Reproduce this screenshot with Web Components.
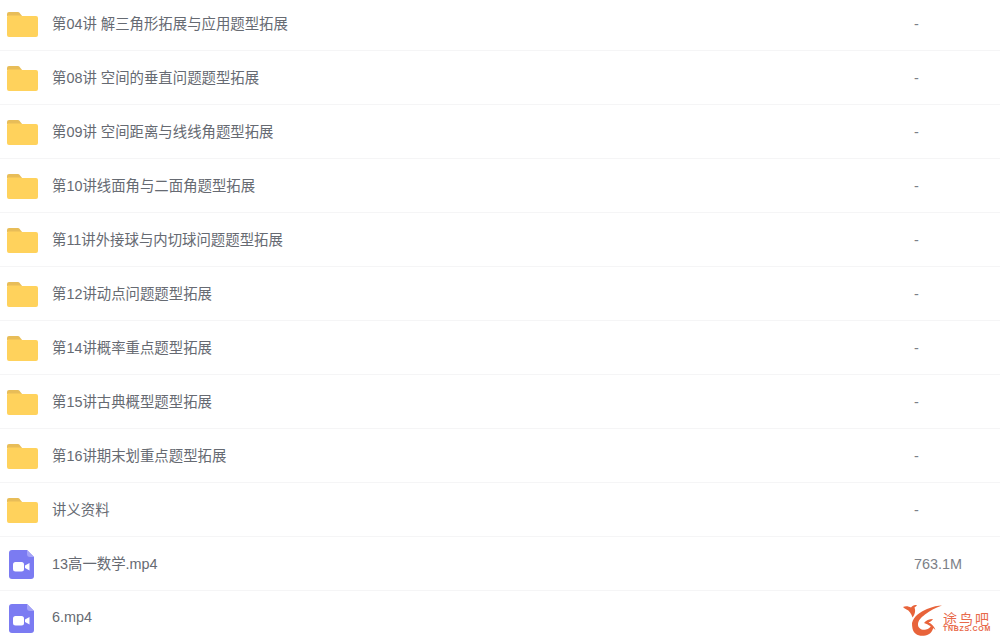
<!DOCTYPE html>
<html>
<head>
<meta charset="utf-8">
<style>
  html, body { margin: 0; height: 100%; overflow: hidden; background: #fff; }
</style>
</head>
<body>
<file-list>
  <file-row name="第04讲 解三角形拓展与应用题型拓展" size="-"></file-row>
  <file-row name="第08讲 空间的垂直问题题型拓展" size="-"></file-row>
  <file-row name="第09讲 空间距离与线线角题型拓展" size="-"></file-row>
  <file-row name="第10讲线面角与二面角题型拓展" size="-"></file-row>
  <file-row name="第11讲外接球与内切球问题题型拓展" size="-"></file-row>
  <file-row name="第12讲动点问题题型拓展" size="-"></file-row>
  <file-row name="第14讲概率重点题型拓展" size="-"></file-row>
  <file-row name="第15讲古典概型题型拓展" size="-"></file-row>
  <file-row name="第16讲期末划重点题型拓展" size="-"></file-row>
  <file-row name="讲义资料" size="-"></file-row>
  <file-row type="video" name="13高一数学.mp4" size="763.1M"></file-row>
  <file-row type="video" name="6.mp4" size=""></file-row>
</file-list>
<site-mark></site-mark>
<script>
class FileList extends HTMLElement {
    constructor() {
        super();
        this.attachShadow({ mode: "open" });
        this.shadowRoot.innerHTML = `
        <style>
            :host { display: block; margin-top: -3px; }
        </style>
        <slot></slot>
        `;
    }
}
customElements.define("file-list", FileList);

const FOLDER = `<svg width="31" height="25" viewBox="0 0 31 25">
    <path d="M0 2a2 2 0 0 1 2-2h9a2 2 0 0 1 1.500.7L15 4H0z" fill="#e8bd58"/>
    <path d="M0 5a2 2 0 0 1 1-1.500h12L15 4h14a2 2 0 0 1 2 2v17a2 2 0 0 1-2 2H2a2 2 0 0 1-2-2z" fill="#ffd25c"/>
</svg>`;

const VIDEO = `<svg width="25" height="29" viewBox="0 0 25 29">
    <path d="M3 0h15l7 7v19a3 3 0 0 1-3 3H3a3 3 0 0 1-3-3V3a3 3 0 0 1 3-3z" fill="#7b7bf2"/>
    <path d="M18 0l7 7h-4a3 3 0 0 1-3-3z" fill="#a5a4f7"/>
    <rect x="4" y="12" width="11" height="9.500" rx="2.500" fill="#fff"/>
    <path d="M16 15.500l4.500-2.500v7.500L16 18z" fill="#fff"/>
</svg>`;

class FileRow extends HTMLElement {
    constructor() {
        super();
        this.attachShadow({ mode: "open" });
        const video = this.getAttribute("type") === "video";
        this.shadowRoot.innerHTML = `
        <style>
            :host {
                display: grid;
                grid-template-columns: 52px 1fr 86px;
                align-items: center;
                height: 53px;
                border-bottom: 1px solid #f5f5f6;
                font: 14.4px "Liberation Sans", "Noto Sans CJK SC", sans-serif;
                color: #666a72;
            }
            .icon { display: flex; padding: 2px 0 0 ${video ? 9 : 7}px; }
            .name { padding-bottom: 2px; }
            .size { color: #7c8087; }
        </style>
        <span class="icon">${video ? VIDEO : FOLDER}</span>
        <span class="name">${this.getAttribute("name")}</span>
        <span class="size">${this.getAttribute("size") || ""}</span>
        `;
    }
}
customElements.define("file-row", FileRow);

class SiteMark extends HTMLElement {
    constructor() {
        super();
        this.attachShadow({ mode: "open" });
        this.shadowRoot.innerHTML = `
        <style>
            :host {
                position: absolute;
                right: 9px;
                bottom: 1px;
                display: flex;
                color: #e8694a;
            }
            svg { flex: none; }
            .words { display: flex; flex-direction: column; width: 48px; padding-top: 7px; }
            .cn { font: 14px/16px "Noto Sans CJK SC", sans-serif; letter-spacing: 2px; }
            .en { margin-top: -1px; font: bold 7px/8px "Liberation Sans", sans-serif; letter-spacing: .7px; white-space: nowrap; }
        </style>
        <svg width="40" height="33" viewBox="0 0 40 33" fill="#e8633a">
            <path d="M0 4c3-1.500 6-.5 8 .5C9.500 2.500 12 1.500 14 2.500l-2.500 2c1.500 4 0 7.500-2 10C8.500 10.500 6 7.500 3.500 6.500 2.500 6 1 5 0 4z"/>
            <path d="M9 20c2-7 8-11 15-14 6-2.500 11-3.500 15-3.500-6 2-12 5-17 9-4 3-7 6-7 10 0 4 4 6 8 5 2.500-.6 4.500-2 5-4l2.500 1.500c-1 4-3 7.500-8 8.500-7 1.500-12-2-13-7-.4-2-.5-3.500-.5-5.500z"/>
            <path d="M21 20c2-2.500 5-4 9-4-1 2-3 3-4.500 3.500 3 1 5.500 3.500 7 7.500-3.500-3-7-5.500-11.500-7z"/>
        </svg>
        <div class="words"><span class="cn">途鸟吧</span><span class="en">TNBZS.COM</span></div>
        `;
    }
}
customElements.define("site-mark", SiteMark);
</script>
</body>
</html>
